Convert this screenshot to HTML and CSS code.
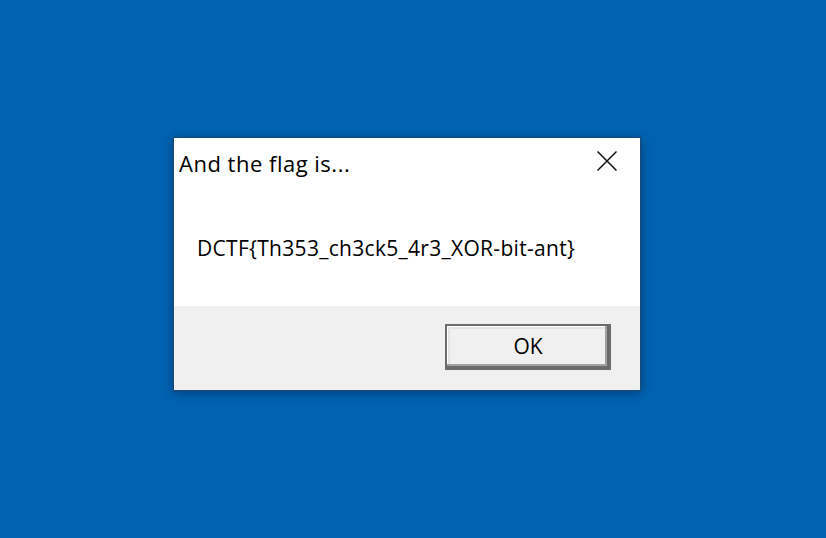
FILE: index.html
```html
<!DOCTYPE html>
<html>
<head>
<meta charset="utf-8">
<link rel="stylesheet" href="styles.css">
</head>
<body>
<div class="desktop">
  <div class="dialog">
    <div class="content">
      <div class="header">
        <div class="title">And the flag is...</div>
        <svg class="close" width="20" height="20" viewBox="0 0 20 20">
          <path d="M0.5 0.5 L19.5 19.5 M19.5 0.5 L0.5 19.5" stroke="#111" stroke-width="1.5" fill="none"/>
        </svg>
      </div>
      <div class="message">DCTF{Th353_ch3ck5_4r3_XOR-bit-ant}</div>
    </div>
    <div class="footer">
      <div class="btn">OK</div>
    </div>
  </div>
</div>
</body>
</html>
```
FILE: styles.css
```css
html, body {
  margin: 0;
  padding: 0;
}
body {
  width: 826px;
  height: 538px;
  background: #0063b1;
  font-family: "Open Sans", "Noto Sans", sans-serif;
  overflow: hidden;
}
.desktop {
  position: relative;
  width: 826px;
  height: 538px;
}
.dialog {
  position: absolute;
  left: 173px;
  top: 137px;
  width: 466px;
  height: 252px;
  border: 1px solid #1c4a74;
  background: #fff;
  box-shadow: 0 2px 10px rgba(0, 20, 50, 0.45);
  display: flex;
  flex-direction: column;
}
.content {
  height: 168px;
  background: #fff;
  display: flex;
  flex-direction: column;
}
.header {
  display: flex;
  justify-content: space-between;
  align-items: flex-start;
  padding: 11px 23px 0 5px;
}
.title {
  font-size: 22px;
  line-height: 28px;
  color: #000;
  letter-spacing: 0.5px;
}
.close {
  margin-top: 2px;
  display: block;
}
.message {
  margin-top: 57px;
  padding-left: 23px;
  font-size: 21px;
  line-height: 28px;
  color: #000;
  letter-spacing: 0.3px;
}
.footer {
  flex: 1;
  background: #f0f0f0;
  display: flex;
  justify-content: flex-end;
  align-items: flex-start;
  padding: 18px 29px 0 0;
}
.btn {
  width: 162px;
  height: 40px;
  padding-bottom: 2px;
  border: 2px solid #6b6b6b;
  background: #f0f0f0;
  box-shadow: inset -2px -2px #6b6b6b, inset -4px -4px #a0a0a0, inset 1px 1px #fff, inset 3px 3px #e3e3e3;
  display: flex;
  align-items: center;
  justify-content: center;
  font-size: 21px;
  color: #000;
  box-sizing: content-box;
}
```
